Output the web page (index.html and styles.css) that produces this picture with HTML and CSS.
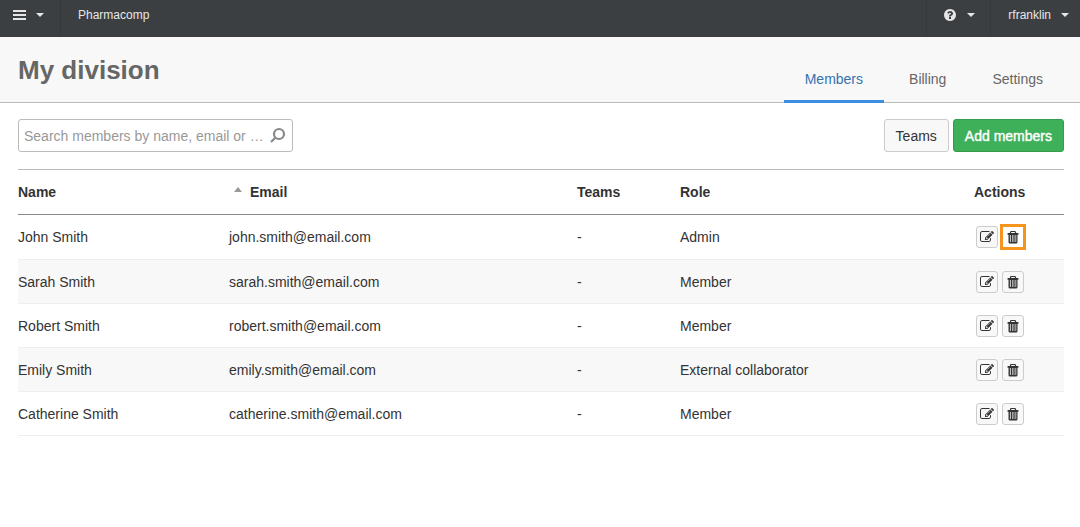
FILE: index.html
```html
<!DOCTYPE html>
<html lang="en">
<head>
<meta charset="utf-8">
<meta name="viewport" content="width=device-width, initial-scale=1">
<title>My division</title>
<link rel="stylesheet" href="styles.css">
</head>
<body>
<svg class="sprite" aria-hidden="true">
  <symbol id="edit" viewBox="0 0 1792 1792"><path d="M888 1184l116-116-152-152-116 116v56h96v96h56zm440-720q-16-16-33 1l-350 350q-17 17-1 33t33-1l350-350q17-17 1-33zm80 594v190q0 119-84.5 203.5t-203.5 84.5h-832q-119 0-203.5-84.5t-84.5-203.5v-832q0-119 84.5-203.5t203.5-84.5h832q63 0 117 25 15 7 18 23 3 17-9 29l-49 49q-14 14-32 8-23-6-45-6h-832q-66 0-113 47t-47 113v832q0 66 47 113t113 47h832q66 0 113-47t47-113v-126q0-13 9-22l64-64q15-15 35-7t20 29zm-96-738l288 288-672 672h-288v-288zm444 132l-92 92-288-288 92-92q28-28 68-28t68 28l152 152q28 28 28 68t-28 68z"/></symbol>
  <symbol id="trash" viewBox="0 0 14 14"><path fill-rule="evenodd" d="M5 1h4q.6 0 .8.5L10.300 3H12q.5 0 .5.500v.8q0 .5-.5.5h-.5V12q0 1.500-1.300 1.500H3.800Q2.500 13.500 2.500 12V4.800H2q-.5 0-.5-.5v-.8Q1.500 3 2 3h1.700l.5-1.500Q4.400 1 5 1zM5.300 2.100L5 3h4l-.3-.9zM3.900 5v7.100h.8V5zM6.100 5v7.100h.6V5zM7.700 5v7.100h.6V5zM9.500 5v7.100h.7V5z"/></symbol>
</svg>

<nav class="topbar">
  <button class="top-item top-menu" aria-label="Menu"><svg width="13" height="11" viewBox="0 0 13 11"><path d="M0 0h13v2H0zM0 4h13v2H0zM0 8h13v2H0z"/></svg><span class="caret"></span></button>
  <a class="top-item top-org" href="#">Pharmacomp</a>
  <span class="top-space"></span>
  <button class="top-item top-help" aria-label="Help"><svg width="14" height="14" viewBox="0 0 1792 1792"><path d="M1024 1376v-192q0-14-9-23t-23-9h-192q-14 0-23 9t-9 23v192q0 14 9 23t23 9h192q14 0 23-9t9-23zm256-672q0-88-55.5-163t-138.5-116-170-41q-243 0-371 213-15 24 8 42l132 100q7 6 19 6 16 0 25-12 53-68 86-92 34-24 86-24 48 0 85.5 26t37.5 59q0 38-20 61t-68 45q-63 28-115.5 86.5t-52.5 125.5v36q0 14 9 23t23 9h192q14 0 23-9t9-23q0-19 21.5-49.5t54.5-49.5q32-18 49-28.5t46-35 44.5-48 28-60.5 12.5-81zm384 192q0 209-103 385.5t-279.5 279.5-385.5 103-385.5-103-279.5-279.5-103-385.5 103-385.5 279.5-279.5 385.5-103 385.5 103 279.5 279.5 103 385.5z"/></svg><span class="caret"></span></button>
  <button class="top-item top-user">rfranklin<span class="caret"></span></button>
</nav>

<header class="page-head">
  <h1>My division</h1>
  <nav class="tabs">
    <a class="tab active" href="#">Members</a>
    <a class="tab" href="#">Billing</a>
    <a class="tab" href="#">Settings</a>
  </nav>
</header>

<main>
  <div class="toolbar">
    <label class="search">
      <input type="text" aria-label="Search members" placeholder="Search members by name, email or …">
      <svg width="17" height="17" viewBox="0 0 17 17"><circle cx="10" cy="7" r="5"/><path d="M6.500 10.500L2 15"/></svg>
    </label>
    <div class="buttons">
      <button class="btn">Teams</button>
      <button class="btn primary">Add members</button>
    </div>
  </div>

  <table class="members">
    <colgroup><col class="c-name"><col class="c-email"><col class="c-teams"><col class="c-role"><col class="c-actions"></colgroup>
    <thead>
      <tr><th>Name</th><th><span class="sort"></span>Email</th><th>Teams</th><th>Role</th><th class="actions-head">Actions</th></tr>
    </thead>
    <tbody>
      <tr><td>John Smith</td><td>john.smith@email.com</td><td>-</td><td>Admin</td><td><div class="actions"><button class="icon-btn" aria-label="Edit"><svg><use href="#edit"/></svg></button><button class="icon-btn marked" aria-label="Delete"><svg><use href="#trash"/></svg></button></div></td></tr>
      <tr><td>Sarah Smith</td><td>sarah.smith@email.com</td><td>-</td><td>Member</td><td><div class="actions"><button class="icon-btn" aria-label="Edit"><svg><use href="#edit"/></svg></button><button class="icon-btn" aria-label="Delete"><svg><use href="#trash"/></svg></button></div></td></tr>
      <tr><td>Robert Smith</td><td>robert.smith@email.com</td><td>-</td><td>Member</td><td><div class="actions"><button class="icon-btn" aria-label="Edit"><svg><use href="#edit"/></svg></button><button class="icon-btn" aria-label="Delete"><svg><use href="#trash"/></svg></button></div></td></tr>
      <tr><td>Emily Smith</td><td>emily.smith@email.com</td><td>-</td><td>External collaborator</td><td><div class="actions"><button class="icon-btn" aria-label="Edit"><svg><use href="#edit"/></svg></button><button class="icon-btn" aria-label="Delete"><svg><use href="#trash"/></svg></button></div></td></tr>
      <tr><td>Catherine Smith</td><td>catherine.smith@email.com</td><td>-</td><td>Member</td><td><div class="actions"><button class="icon-btn" aria-label="Edit"><svg><use href="#edit"/></svg></button><button class="icon-btn" aria-label="Delete"><svg><use href="#trash"/></svg></button></div></td></tr>
    </tbody>
  </table>
</main>
</body>
</html>
```
FILE: styles.css
```css
* { box-sizing: border-box; }
body {
  margin: 0;
  background: #fff;
  color: #333;
  font: 14px/20px "Liberation Sans", Arial, sans-serif;
}
button, input { font: inherit; color: inherit; }
button { cursor: pointer; }
a { color: inherit; text-decoration: none; }
.sprite { display: none; }

.topbar {
  display: flex;
  height: 37px;
  background: #3c3f42;
  color: #e6e6e6;
  font-size: 12px;
}
.top-item {
  display: flex;
  align-items: center;
  padding: 0 0 7px;
  border: 0;
  background: none;
}
.top-item svg { fill: currentColor; }
.top-space { flex: 1; }
.top-menu { width: 61px; padding-left: 13px; gap: 10px; border-right: 1px solid #36393b; }
.top-org { padding-left: 17px; padding-right: 14px; }
.top-help { width: 64px; padding-left: 16px; gap: 10px; border-left: 1px solid #36393b; }
.top-user { padding-left: 17px; padding-right: 11px; gap: 10px; border-left: 1px solid #36393b; }
.caret {
  border: 4px solid transparent;
  border-top-color: currentColor;
  border-bottom: 0;
}

.page-head {
  display: flex;
  justify-content: space-between;
  height: 66px;
  padding: 0 16px 0 18px;
  background: #f8f8f8;
  border-bottom: 1px solid #bbb;
}
h1 {
  margin: 0;
  padding-top: 17px;
  color: #666;
  font-size: 26px;
  line-height: 32px;
}
.tabs { display: flex; }
.tab {
  height: 66px;
  padding: 32px 21px 0;
  color: #666;
}
.tab:nth-child(2) { padding: 32px 25px 0; }
.tab.active { color: #3572b0; border-bottom: 3px solid #3b8ee0; }

main { padding: 16px 16px 0 18px; }
.toolbar { display: flex; justify-content: space-between; margin-bottom: 17px; }
.search {
  display: flex;
  align-items: center;
  width: 275px;
  height: 33px;
  padding: 0 6px 0 5px;
  gap: 5px;
  border: 1px solid #bbb;
  border-radius: 3px;
}
.search input {
  flex: 1;
  min-width: 0;
  padding: 0;
  border: 0;
  outline: 0;
  background: none;
  text-overflow: ellipsis;
}
.search input::placeholder { color: #999; opacity: 1; }
.search svg { flex: none; fill: none; stroke: #888; stroke-width: 2.2; }
.buttons { display: flex; gap: 4px; }
.btn {
  height: 33px;
  padding: 0 11px;
  border: 1px solid #ccc;
  border-radius: 3px;
  background: #f8f8f8;
}
.btn.primary { background: #3eb05a; border-color: #359b4e; color: #fff; -webkit-text-stroke: 0.4px #fff; }

.members {
  width: 100%;
  table-layout: fixed;
  border-collapse: separate;
  border-spacing: 0;
  border-top: 1px solid #bbb;
  border-bottom: 1px solid #eee;
}
.c-name { width: 211px; }
.c-email { width: 348px; }
.c-teams { width: 103px; }
.c-actions { width: 90px; }
th, td { padding: 0; text-align: left; }
th { height: 45px; border-bottom: 1px solid #888; }
td { height: 44px; }
tr + tr td { border-top: 1px solid #eee; }
tbody tr:nth-child(even) { background: #f8f8f8; }
.sort {
  display: inline-block;
  margin: 0 8px 5px 5px;
  border: 4px solid transparent;
  border-bottom: 5px solid #999;
  border-top: 0;
}
.actions { display: flex; align-items: center; gap: 4px; padding-left: 2px; }
.icon-btn {
  display: flex;
  align-items: center;
  justify-content: center;
  width: 22px;
  height: 22px;
  padding: 0;
  border: 1px solid #ccc;
  border-radius: 3px;
  background: #f8f8f8;
}
.icon-btn svg { width: 14px; height: 14px; flex: none; fill: #333; }
.icon-btn.marked { border-color: #fff; background: #fff; outline: 3px solid #f7941d; outline-offset: -1px; border-radius: 0; }
```
